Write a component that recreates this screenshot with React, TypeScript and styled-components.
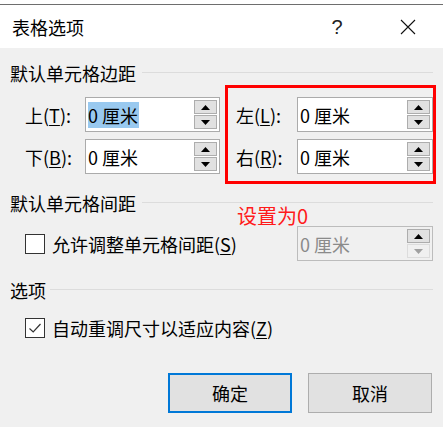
import React from "react";
import styled, { createGlobalStyle } from "styled-components";

const Global = createGlobalStyle`
  html, body { margin: 0; padding: 0; background: #f0f0f0; }
  body {
    font-family: "Noto Sans CJK SC", "Microsoft YaHei", sans-serif;
    color: #000;
    width: 443px;
    height: 427px;
    overflow: hidden;
  }
  * { box-sizing: border-box; }
`;

const Window = styled.div`
  position: relative;
  width: 443px;
  height: 427px;
  background: #ffffff;
  padding-top: 4px;
  display: flex;
  flex-direction: column;
`;

const TitleBar = styled.div`
  height: 44px;
  border-top: 1px solid #6e6e6e;
  background: #ffffff;
  display: flex;
  align-items: center;
  padding-left: 12px;
`;

const Title = styled.div`
  font-size: 18px;
  line-height: 26px;
  flex: 1;
`;

const HelpMark = styled.div`
  width: 14px;
  font-size: 20px;
  font-family: "Liberation Sans", sans-serif;
  color: #222;
  text-align: center;
  margin-right: 56px;
  line-height: 26px;
`;

const CloseIcon = styled.svg`
  width: 16px;
  height: 16px;
  margin-right: 27px;
`;

const Body = styled.div`
  flex: 1;
  background: #f0f0f0;
  padding: 12px 10px 0 10px;
  display: flex;
  flex-direction: column;
`;

const GroupHeading = styled.div<{ $top?: number; $gap?: number }>`
  display: flex;
  align-items: center;
  height: 26px;
  margin-top: ${(p) => p.$top ?? 0}px;
  font-size: 18px;
  line-height: 26px;
  color: #000;
  gap: ${(p) => p.$gap ?? 6}px;
  &::after {
    content: "";
    flex: 1;
    height: 1px;
    background: #dcdcdc;
    margin-top: -2px;
  }
`;

const FieldGrid = styled.div`
  display: grid;
  grid-template-columns: 60px 135px 77px 136px;
  grid-auto-rows: 35px;
  row-gap: 7px;
  margin-top: 11px;
  padding-left: 15px;
`;

const FieldLabel = styled.div<{ $indent?: number }>`
  display: flex;
  align-items: center;
  padding-left: ${(p) => p.$indent ?? 0}px;
  font-size: 18px;
  white-space: nowrap;
`;

const Key = styled.span`
  text-decoration: underline;
  text-underline-offset: 2px;
  text-decoration-thickness: 1px;
`;

const SpinBox = styled.div<{ $disabled?: boolean }>`
  height: 35px;
  width: 100%;
  border: 1px solid ${(p) => (p.$disabled ? "#bcbcbc" : "#ababab")};
  background: ${(p) => (p.$disabled ? "#f0f0f0" : "#ffffff")};
  display: flex;
  align-items: center;
  padding: 0 2px 0 2px;
`;

const SpinValue = styled.div<{ $disabled?: boolean }>`
  flex: 1;
  font-size: 18px;
  line-height: 24px;
  color: ${(p) => (p.$disabled ? "#8a8a8a" : "#000")};
  white-space: nowrap;
`;

const Selected = styled.span`
  background: #99c9ef;
  padding: 0 1px 0 0;
`;

const SpinColumn = styled.div`
  display: flex;
  flex-direction: column;
  gap: 1px;
  width: 23px;
`;

const SpinButton = styled.div<{ $dim?: boolean }>`
  height: 14px;
  background: ${(p) => (p.$dim ? "#f0f0f0" : "#e1e1e1")};
  border: 1px solid ${(p) => (p.$dim ? "#dcdcdc" : "#adadad")};
  display: flex;
  align-items: center;
  justify-content: center;
`;

const Arrow = styled.svg`
  width: 9px;
  height: 5px;
`;

const OptionRow = styled.div<{ $top: number }>`
  display: flex;
  align-items: center;
  height: 35px;
  margin-top: ${(p) => p.$top}px;
  padding-left: 15px;
`;

const CheckBox = styled.div`
  width: 20px;
  height: 20px;
  border: 1px solid #333333;
  background: #ffffff;
  display: flex;
  align-items: center;
  justify-content: center;
  flex-shrink: 0;
`;

const OptionLabel = styled.div`
  margin-left: 7px;
  font-size: 18px;
  white-space: nowrap;
  flex: 1;
`;

const DisabledField = styled.div`
  width: 136px;
`;

const ButtonRow = styled.div`
  display: flex;
  justify-content: flex-end;
  gap: 16px;
  margin-top: 28px;
  padding-right: 1px;
`;

const DialogButton = styled.button<{ $primary?: boolean }>`
  width: 124px;
  height: 40px;
  font-family: inherit;
  font-size: 18px;
  color: #000;
  background: #e1e1e1;
  border: ${(p) => (p.$primary ? "2px solid #0078d7" : "1px solid #adadad")};
  padding: 0;
  display: flex;
  align-items: center;
  justify-content: center;
`;

const Highlight = styled.div`
  position: absolute;
  left: 225px;
  top: 85px;
  width: 211px;
  height: 99px;
  border: 3px solid #ff0000;
  pointer-events: none;
`;

const Note = styled.div`
  position: absolute;
  left: 237px;
  top: 203px;
  font-size: 20px;
  line-height: 26px;
  color: #ff1a1a;
`;

const Up = ({ color = "#000" }: { color?: string }) => (
  <Arrow viewBox="0 0 9 5">
    <polygon points="0,5 9,5 4.5,0" fill={color} />
  </Arrow>
);
const Down = ({ color = "#000" }: { color?: string }) => (
  <Arrow viewBox="0 0 9 5">
    <polygon points="0,0 9,0 4.5,5" fill={color} />
  </Arrow>
);

const Spinner = ({
  value,
  selected,
  disabled,
}: {
  value: string;
  selected?: boolean;
  disabled?: boolean;
}) => (
  <SpinBox $disabled={disabled}>
    <SpinValue $disabled={disabled}>
      {selected ? <Selected>{value}</Selected> : value}
    </SpinValue>
    <SpinColumn>
      <SpinButton>
        <Up />
      </SpinButton>
      <SpinButton $dim={disabled}>
        <Down color={disabled ? "#a0a0a0" : "#000"} />
      </SpinButton>
    </SpinColumn>
  </SpinBox>
);

export default function App() {
  return (
    <>
      <Global />
      <Window>
        <TitleBar>
          <Title>表格选项</Title>
          <HelpMark>?</HelpMark>
          <CloseIcon viewBox="0 0 16 16">
            <path d="M1 1 L15 15 M15 1 L1 15" stroke="#111" strokeWidth="1.1" fill="none" />
          </CloseIcon>
        </TitleBar>
        <Body>
          <GroupHeading>默认单元格边距</GroupHeading>
          <FieldGrid>
            <FieldLabel>
              上(<Key>T</Key>):
            </FieldLabel>
            <Spinner value="0 厘米" selected />
            <FieldLabel $indent={16}>
              左(<Key>L</Key>):
            </FieldLabel>
            <Spinner value="0 厘米" />
            <FieldLabel>
              下(<Key>B</Key>):
            </FieldLabel>
            <Spinner value="0 厘米" />
            <FieldLabel $indent={16}>
              右(<Key>R</Key>):
            </FieldLabel>
            <Spinner value="0 厘米" />
          </FieldGrid>

          <GroupHeading $top={16}>默认单元格间距</GroupHeading>
          <OptionRow $top={10}>
            <CheckBox />
            <OptionLabel>
              允许调整单元格间距(<Key>S</Key>)
            </OptionLabel>
            <DisabledField>
              <Spinner value="0 厘米" disabled />
            </DisabledField>
          </OptionRow>

          <GroupHeading $top={16} $gap={4}>
            选项
          </GroupHeading>
          <OptionRow $top={7}>
            <CheckBox>
              <svg width="14" height="14" viewBox="0 0 14 14">
                <path d="M1.5 7.5 L5.2 11 L12.5 3" stroke="#333" strokeWidth="1.2" fill="none" />
              </svg>
            </CheckBox>
            <OptionLabel>
              自动重调尺寸以适应内容(<Key>Z</Key>)
            </OptionLabel>
          </OptionRow>

          <ButtonRow>
            <DialogButton $primary>确定</DialogButton>
            <DialogButton>取消</DialogButton>
          </ButtonRow>
        </Body>
        <Highlight />
        <Note>设置为0</Note>
      </Window>
    </>
  );
}
